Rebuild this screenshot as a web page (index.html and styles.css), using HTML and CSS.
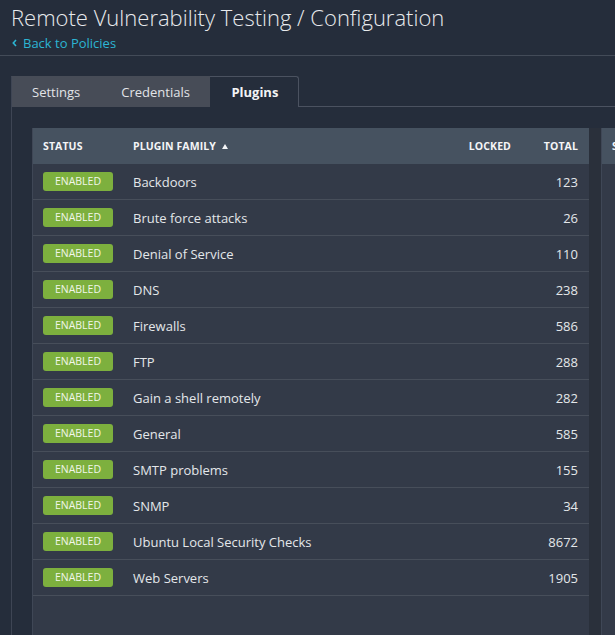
FILE: index.html
```html
<!DOCTYPE html>
<html>
<head>
<meta charset="utf-8">
<link rel="stylesheet" href="styles.css">
</head>
<body>
<header class="page-head">
  <h1 class="title">Remote Vulnerability Testing / Configuration</h1>
  <a class="back" href="#"><svg class="chev" width="5" height="8" viewBox="0 0 5 8"><path d="M4 1 L1.3 4 L4 7" fill="none" stroke="currentColor" stroke-width="1.6"/></svg>Back to Policies</a>
</header>
<main class="main">
  <nav class="tabs">
    <div class="tab">Settings</div>
    <div class="tab">Credentials</div>
    <div class="tab active">Plugins</div>
    <div class="tab-rest"></div>
  </nav>
  <section class="panel">
    <div class="tables">
      <div class="table">
        <div class="row head">
          <div class="c">STATUS</div>
          <div class="c">PLUGIN FAMILY <span class="sort"></span></div>
          <div class="c num">LOCKED</div>
          <div class="c num">TOTAL</div>
        </div>
        <div class="row"><div class="c"><span class="badge">ENABLED</span></div><div class="c">Backdoors</div><div class="c num"></div><div class="c num">123</div></div>
        <div class="row"><div class="c"><span class="badge">ENABLED</span></div><div class="c">Brute force attacks</div><div class="c num"></div><div class="c num">26</div></div>
        <div class="row"><div class="c"><span class="badge">ENABLED</span></div><div class="c">Denial of Service</div><div class="c num"></div><div class="c num">110</div></div>
        <div class="row"><div class="c"><span class="badge">ENABLED</span></div><div class="c">DNS</div><div class="c num"></div><div class="c num">238</div></div>
        <div class="row"><div class="c"><span class="badge">ENABLED</span></div><div class="c">Firewalls</div><div class="c num"></div><div class="c num">586</div></div>
        <div class="row"><div class="c"><span class="badge">ENABLED</span></div><div class="c">FTP</div><div class="c num"></div><div class="c num">288</div></div>
        <div class="row"><div class="c"><span class="badge">ENABLED</span></div><div class="c">Gain a shell remotely</div><div class="c num"></div><div class="c num">282</div></div>
        <div class="row"><div class="c"><span class="badge">ENABLED</span></div><div class="c">General</div><div class="c num"></div><div class="c num">585</div></div>
        <div class="row"><div class="c"><span class="badge">ENABLED</span></div><div class="c">SMTP problems</div><div class="c num"></div><div class="c num">155</div></div>
        <div class="row"><div class="c"><span class="badge">ENABLED</span></div><div class="c">SNMP</div><div class="c num"></div><div class="c num">34</div></div>
        <div class="row"><div class="c"><span class="badge">ENABLED</span></div><div class="c">Ubuntu Local Security Checks</div><div class="c num"></div><div class="c num">8672</div></div>
        <div class="row"><div class="c"><span class="badge">ENABLED</span></div><div class="c">Web Servers</div><div class="c num"></div><div class="c num">1905</div></div>
      </div>
      <div class="strip"></div>
      <div class="table side">
        <div class="row head"><div class="c">STATUS</div></div>
      </div>
    </div>
  </section>
</main>
</body>
</html>
```

FILE: styles.css
```css
html, body {
  margin: 0;
  padding: 0;
  background: #252d3b;
  height: 635px;
  overflow: hidden;
  font-family: "Open Sans", "Noto Sans", sans-serif;
  color: #e4e7ea;
}

.page-head {
  padding: 2px 11px 0;
  height: 53px;
  border-bottom: 1px solid #434b58;
}

.title {
  margin: 0;
  font-size: 22px;
  font-weight: 300;
  line-height: 30px;
  color: #e8eaed;
  white-space: nowrap;
}

.back {
  display: flex;
  width: fit-content;
  align-items: center;
  gap: 6px;
  margin-left: 1px;
  margin-top: 2px;
  font-size: 13px;
  line-height: 18px;
  color: #2cb5d3;
  text-decoration: none;
}

.chev { display: block; }

.main {
  padding: 20px 0 0 11px;
}

.tabs {
  display: flex;
  height: 31px;
}

.tab {
  padding: 0 20.5px;
  font-size: 13px;
  line-height: 30px;
  background: #474c57;
  color: #e2e4e7;
  border-top: 1px solid #474c57;
}

.tab:first-child {
  border-left: 1px solid #3e4554;
  padding-left: 20px;
}

.tab.active {
  background: #252d3b;
  font-weight: 700;
  color: #f2f3f5;
  border-top: 1px solid #4b5260;
  border-right: 1px solid #4b5260;
  border-radius: 0 3px 0 0;
  padding: 0 20px 0 21px;
}

.tab-rest {
  flex: 1;
  border-bottom: 1px solid #4b5260;
}

.panel {
  border-left: 1px solid #3e4554;
  padding: 21px 0 0 20px;
  height: 600px;
}

.tables {
  display: flex;
  height: 600px;
}

.table {
  width: 557px;
  flex: none;
  background: #333a48;
  border-left: 1px solid #3f4756;
  box-sizing: border-box;
}

.row {
  display: grid;
  grid-template-columns: 90px 1fr 89px 67px;
  height: 35px;
  border-bottom: 1px solid #474e5a;
  align-items: center;
}

.row.head {
  height: 36px;
  border-bottom: none;
  background: #465260;
  font-weight: 700;
  color: #f4f5f7;
  letter-spacing: 0.1px;
}

.c {
  padding: 0 11px 0 10px;
  font-size: 13px;
  white-space: nowrap;
  display: flex;
  align-items: center;
}

.head .c {
  font-size: 10.5px;
}

.num {
  justify-content: flex-end;
}

.sort {
  display: inline-block;
  flex: none;
  width: 0;
  height: 0;
  margin-left: 6px;
  border-left: 3px solid transparent;
  border-right: 3px solid transparent;
  border-bottom: 5px solid #f4f5f7;
}

.badge {
  display: inline-block;
  flex: none;
  width: 70px;
  height: 19px;
  line-height: 19px;
  text-align: center;
  background: #7db03e;
  color: #f1f6ea;
  font-size: 10.5px;
  border-radius: 3px;
}

.strip {
  width: 12px;
  flex: none;
  background: #2a303b;
  border-right: 1px solid #3f4756;
}

.table.side {
  width: 200px;
  border-left: none;
}
```
